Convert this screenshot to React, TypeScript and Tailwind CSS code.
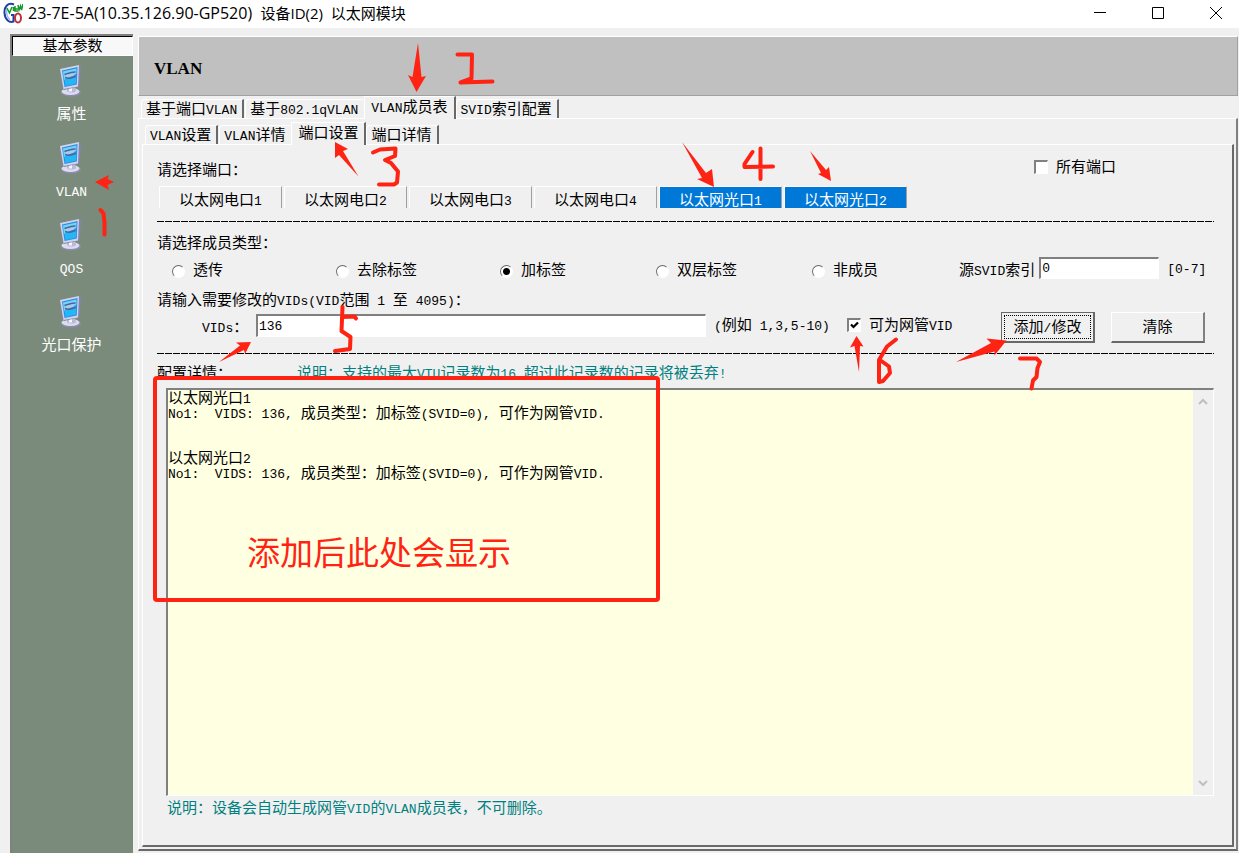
import { useState } from "react"

const sideItems = ["属性", "VLAN", "QOS", "光口保护"]
const mainTabs = ["基于端口VLAN", "基于802.1qVLAN", "VLAN成员表", "SVID索引配置"]
const subTabs = ["VLAN设置", "VLAN详情", "端口设置", "端口详情"]
const ports = ["以太网电口1", "以太网电口2", "以太网电口3", "以太网电口4", "以太网光口1", "以太网光口2"]
const memberTypes = [
  { label: "透传", width: "w-[164px]" },
  { label: "去除标签", width: "w-[164px]" },
  { label: "加标签", width: "w-[156px]" },
  { label: "双层标签", width: "w-[156px]" },
  { label: "非成员", width: "w-[147px]" },
]
const records = [
  "以太网光口1",
  "No1:  VIDS: 136, 成员类型：加标签(SVID=0), 可作为网管VID.",
  "",
  "",
  "以太网光口2",
  "No1:  VIDS: 136, 成员类型：加标签(SVID=0), 可作为网管VID.",
]

// latin runs are set smaller, so two letters take about one hanzi
function Mixed({ text }: { text: string }) {
  return (
    <span className="inline-block pt-1 leading-4 whitespace-pre">
      {text.split(/([\x20-\x7e]+)/).map((part, i) =>
        i % 2 ? (
          <span key={i} className="text-[13px]">
            {part}
          </span>
        ) : (
          part
        )
      )}
    </span>
  )
}

function AppLogo() {
  return (
    <svg width="20" height="22" viewBox="0 0 20 22" aria-hidden="true">
      <path d="M11 2.500C5 0 1 5 1.500 11c.5 7 5 10 9 8.500V13H8" fill="none" stroke="#1f3fa8" strokeWidth="2" />
      <path d="M4 6c-1 5 0 9 3 12" fill="none" stroke="#9db8f0" strokeWidth="1.500" />
      <ellipse cx="15" cy="16" rx="3" ry="4.500" fill="#fff" stroke="#c0303a" strokeWidth="2" />
      <path d="M4 6l2.500 5L9 5M10.500 5v4M12 7h3M12 4v5h3M15 3l1 5 1.500-4 1 4L20 2" fill="none" stroke="#149a2c" strokeWidth="1.500" />
    </svg>
  )
}

function MonitorIcon() {
  return (
    <svg width="24" height="32" viewBox="0 0 24 32" aria-hidden="true">
      <ellipse cx="12" cy="27.500" rx="10" ry="4" fill="#8b8bb4" />
      <ellipse cx="11.500" cy="26.500" rx="9" ry="3.500" fill="#dcdcec" />
      <path d="M8 22l8-1 1 5c-2 2-7 2-9 0z" fill="#b8b8d8" />
      <path d="M10 22l3-.5v5h-3z" fill="#f4f4fc" />
      <path d="M1 4L20 0l2 1.500-1.500 20L5 25l-1.500-2z" fill="#8484ae" />
      <path d="M1 4L20 0l-1 21.500L4.500 24z" fill="#d0d4e8" />
      <path d="M3 5.500L18.500 2 17.800 19.500 5.500 22z" fill="#2b8fe8" />
      <path d="M4 6.500L17.500 3.500 17.200 9 5 15z" fill="#74d5fa" />
      <path d="M5.500 14.500l11.800-2L17 18.500 6.500 21z" fill="#22b8f5" />
      <path d="M5.500 9.500c3-1 8-3 11-2.500M6 12.500c3 1.500 8 .5 10.500-1.500" fill="none" stroke="#4f649c" strokeWidth="1.500" />
      <path d="M7 11l8-1.500" stroke="#b9c6de" strokeWidth="2" />
    </svg>
  )
}

function Tabs({ items, active, onSelect, label }: { items: string[]; active: number; onSelect: (i: number) => void; label: string }) {
  return (
    <div role="tablist" aria-label={label} className="flex items-end pl-[3px]">
      {items.map((item, i) => (
        <button
          key={item}
          type="button"
          role="tab"
          aria-selected={i === active}
          onClick={() => onSelect(i)}
          className={
            i === active
              ? "relative -mb-px flex h-[23px] items-start border-r-2 border-l border-t border-l-white border-t-white border-r-[#696969] bg-[#f0f0f0] pr-[6px] pl-[6px] leading-5"
              : `mr-px flex h-[19px] items-center rounded-tl-sm border-l border-t border-l-white border-t-white pr-[5px] pl-[4px] leading-4 ${
                  i === active - 1 ? "" : "border-r-2 border-r-[#696969]"
                }`
          }
        >
          <Mixed text={item} />
        </button>
      ))}
    </div>
  )
}

function CheckBox({ label, checked, onChange }: { label: string; checked: boolean; onChange: (v: boolean) => void }) {
  return (
    <label className="flex items-center gap-2">
      <span className="relative flex">
        <input
          type="checkbox"
          checked={checked}
          onChange={(e) => onChange(e.target.checked)}
          className="size-[14px] appearance-none border border-t-2 border-l-2 border-t-[#808080] border-l-[#808080] border-r-white border-b-white bg-white"
        />
        {checked && (
          <svg className="pointer-events-none absolute top-[3px] left-[3px]" width="9" height="9" viewBox="0 0 9 9">
            <path d="M1 3.500l2.500 2.500L8 1.500" fill="none" stroke="#000" strokeWidth="2.200" />
          </svg>
        )}
      </span>
      <Mixed text={label} />
    </label>
  )
}

function Dashes({ className }: { className: string }) {
  return (
    <div
      className={`h-px shrink-0 bg-[repeating-linear-gradient(90deg,#000_0,#000_7px,transparent_7px,transparent_8px)] ${className}`}
    />
  )
}

const sunken =
  "border border-t-2 border-l-2 border-t-[#808080] border-l-[#808080] border-r-white border-b-white bg-white px-px font-['Liberation_Mono',monospace] text-[13px] outline-none"

// hand-drawn step marks on top of the window
function Annotations() {
  return (
    <div className="pointer-events-none absolute top-0 left-0 text-[#ff2314]">
      <svg width="1239" height="853" viewBox="0 0 1239 853" aria-hidden="true">
        <g fill="currentColor">
          <path d="M95 182l14-7-1.500 4 6.500 3-6.500 3 1.500 5z" />
          <path d="M418 43l3.500 34 4.500-1-9.500 16L408 75l4.500 2z" />
          <path d="M335 142l13 7-5 2 15.500 25.500L339 155l-4 3z" />
          <path d="M682 142l24 31 6-4 2 18-17-8 5-1z" />
          <path d="M810 151l16 19 3-3 2 14-13-7 3-1z" />
          <path d="M219 362l21-16.500-4-3 15-.5-6 12-1-4z" />
          <path d="M856.500 336l7 10.500-3.500-.5-1 26-4.500-26-4.500 1.500z" />
          <path d="M956 362l35-19-4.500-4.500 20 2-12 15v-4z" />
        </g>
        <g fill="none" stroke="currentColor" strokeWidth="4" strokeLinecap="round" strokeLinejoin="round">
          <path d="M100.500 210l3 3.500 1 9v12" />
          <path d="M457.500 54.500h14.500l-.5 24-11 4 32-1" />
          <path d="M373 152.500l7-3 15.500-1-.5 7.500-10 4 6 3 7 8.500-1 11-3 2h-15" />
          <path d="M752.500 152l-8 12v3l28.500-.5M760.500 148.500V179" />
          <path d="M342.500 307l-1 24 9 6-.5 12-15 2M342.500 317l12-.5 1.500 2" />
          <path d="M896 339.500l-9 7-8 13.500v22l4-1 7-8-1-6.500-9-6.500" />
          <path d="M1020 358.500h16.500l3.500 3.500-2.500 6-1 9-3.500 3.500-1.500 8" />
          <rect x="155" y="378" width="503" height="222" rx="2" />
        </g>
      </svg>
      <p className="absolute top-[537px] left-[247px] text-[33px] leading-10 whitespace-nowrap">添加后此处会显示</p>
    </div>
  )
}

export default function App() {
  const [mainTab, setMainTab] = useState(2)
  const [subTab, setSubTab] = useState(2)
  const [selected, setSelected] = useState<number[]>([4, 5])
  const [allPorts, setAllPorts] = useState(false)
  const [memberType, setMemberType] = useState(2)
  const [svid, setSvid] = useState("0")
  const [vids, setVids] = useState("136")
  const [manageVid, setManageVid] = useState(true)

  function togglePort(i: number) {
    setSelected((prev) => (prev.includes(i) ? prev.filter((p) => p !== i) : [...prev, i]))
  }

  return (
    <div className="relative flex min-h-screen flex-col bg-[#f0f0f0] font-['Liberation_Mono','Noto_Sans_CJK_SC',monospace] text-[15px] leading-5 text-black">
      {/* 标题栏 */}
      <header className="flex h-7 shrink-0 items-center bg-white pb-[2px] pl-[3px]">
        <AppLogo />
        <h1 className="ml-[5px] flex-1 font-['Open_Sans','Noto_Sans_CJK_SC',sans-serif] text-[16px] whitespace-pre">
          23-7E-5A(10.35.126.90-GP520)  <span className="text-[15px]">设备ID(2)  以太网模块</span>
        </h1>
        <div className="flex h-full gap-3">
          <button type="button" aria-label="最小化" className="flex w-[46px] items-center justify-center">
            <svg width="12" height="12" stroke="#000">
              <path d="M0 5.500h12" />
            </svg>
          </button>
          <button type="button" aria-label="最大化" className="flex w-[46px] items-center justify-center">
            <svg width="12" height="12" fill="none" stroke="#000">
              <path d="M.5.5h11v11H.5z" />
            </svg>
          </button>
          <button type="button" aria-label="关闭" className="flex w-[46px] items-center justify-center">
            <svg width="12" height="12" stroke="#000">
              <path d="M0 0l12 12M12 0L0 12" />
            </svg>
          </button>
        </div>
      </header>

      <div className="flex flex-1">
        {/* 左侧导航 */}
        <nav className="mt-[6px] ml-[10px] flex w-[123px] shrink-0 flex-col border-t-2 border-l-2 border-[#808080] bg-[#7b8b7b]">
          <button
            type="button"
            className="flex h-5 items-center justify-center border-t border-l border-t-black border-l-black border-r border-b border-r-white border-b-white bg-[#f8f8f8]"
          >
            <Mixed text="基本参数" />
          </button>
          {sideItems.map((item) => (
            <button key={item} type="button" className="flex h-[77px] flex-col items-center pt-[9px] pr-[2px] text-white">
              <span className="pr-[2px]">
                <MonitorIcon />
              </span>
              <span className="mt-[7px] flex">
                <Mixed text={item} />
              </span>
            </button>
          ))}
        </nav>

        <main className="mt-2 mr-px ml-[5px] flex min-w-0 flex-1 flex-col">
          <div className="flex h-[60px] shrink-0 items-center border border-t-white border-l-white border-r-[#a0a0a0] border-b-[#a0a0a0] bg-[#c0c0c0] px-[15px] pt-[6px]">
            <h2 className="font-['Liberation_Serif',serif] text-[17px] font-bold">VLAN</h2>
          </div>

          <div className="flex h-[22px] shrink-0 items-end">
            <Tabs items={mainTabs} active={mainTab} onSelect={setMainTab} label="VLAN" />
          </div>
          <section className="mb-[2px] flex flex-1 flex-col border-t border-r-2 border-b-2 border-l border-t-white border-l-white border-r-[#808080] border-b-[#696969] pr-[2px] pb-[2px] pl-[3px]">
            <div className="flex h-[25px] shrink-0 items-end">
              <Tabs items={subTabs} active={subTab} onSelect={setSubTab} label="VLAN成员表" />
            </div>
            <form
              onSubmit={(e) => e.preventDefault()}
              className="flex flex-1 flex-col border-t border-r-2 border-b-2 border-l border-t-white border-l-white border-r-[#696969] border-b-[#696969] pr-[18px] pb-[27px] pl-[14px]"
            >
              <div className="mt-[13px] flex h-6 items-center justify-between">
                <Mixed text="请选择端口：" />
                <div className="mr-[98px] mb-[6px]">
                  <CheckBox label="所有端口" checked={allPorts} onChange={setAllPorts} />
                </div>
              </div>

              <div className="mt-1 ml-[2px] flex h-[22px] gap-[2px]">
                {ports.map((port, i) => (
                  <button
                    key={port}
                    type="button"
                    aria-pressed={selected.includes(i)}
                    onClick={() => togglePort(i)}
                    className={`flex w-[123px] justify-center border-t border-r border-l border-t-white border-l-white border-r-[#a0a0a0] pt-[3px] leading-5 ${
                      selected.includes(i) ? "bg-[#0078d7] text-white" : ""
                    }`}
                  >
                    <Mixed text={port} />
                  </button>
                ))}
              </div>
              <Dashes className="mt-[13px]" />

              <div className="mt-[11px] flex h-5">
                <Mixed text="请选择成员类型：" />
              </div>
              <div className="mt-1 flex h-[26px] items-center pl-[15px]">
                {memberTypes.map((type, i) => (
                  <label key={type.label} className={`flex items-center gap-2 ${type.width}`}>
                    <input
                      type="radio"
                      name="memberType"
                      checked={memberType === i}
                      onChange={() => setMemberType(i)}
                      className="mt-[2px] size-[13px] appearance-none rounded-full border border-t-[#696969] border-l-[#696969] border-r-white border-b-white bg-white checked:bg-[radial-gradient(circle,#000_0,#000_3px,#fff_4px)]"
                    />
                    <Mixed text={type.label} />
                  </label>
                ))}
                <label htmlFor="svid" className="flex">
                  <Mixed text="源SVID索引" />
                </label>
                <input
                  id="svid"
                  value={svid}
                  onChange={(e) => setSvid(e.target.value)}
                  className={`ml-1 h-[22px] w-[120px] self-start ${sunken}`}
                />
                <span className="mb-1 ml-2 flex">
                  <Mixed text="[0-7]" />
                </span>
              </div>

              <div className="mt-[7px] flex h-5">
                <Mixed text="请输入需要修改的VIDs(VID范围 1 至 4095)：" />
              </div>
              <div className="mt-[2px] flex h-[31px] items-center">
                <label htmlFor="vids" className="mb-[2px] ml-[45px] flex w-[54px]">
                  <Mixed text="VIDs：" />
                </label>
                <input
                  id="vids"
                  value={vids}
                  onChange={(e) => setVids(e.target.value)}
                  className={`mb-1 h-[23px] w-[450px] ${sunken}`}
                />
                <span className="mb-[6px] ml-2 flex w-[133px]">
                  <Mixed text="(例如 1,3,5-10)" />
                </span>
                <div className="mb-[6px]">
                  <CheckBox label="可为网管VID" checked={manageVid} onChange={setManageVid} />
                </div>
                <button
                  type="submit"
                  className="mr-4 ml-auto h-[31px] w-[94px] border border-r-2 border-b-2 border-[#696969] p-[2px]"
                >
                  <span className="flex h-full items-center justify-center border border-dotted border-black">
                    <Mixed text="添加/修改" />
                  </span>
                </button>
                <button
                  type="button"
                  onClick={() => setVids("")}
                  className="mr-[9px] flex h-[31px] w-[94px] items-center justify-center border border-r-2 border-b-2 border-t-white border-l-white border-r-[#808080] border-b-[#696969]"
                >
                  <Mixed text="清除" />
                </button>
              </div>
              <Dashes className="mt-[10px]" />

              <div className="mt-[9px] flex h-5">
                <span className="flex w-[140px]">
                  <Mixed text="配置详情：" />
                </span>
                <span className="flex text-[#008080]">
                  <Mixed text="说明：支持的最大VTU记录数为16,超过此记录数的记录将被丢弃!" />
                </span>
              </div>
              <div className="mt-[5px] ml-[9px] flex flex-1 border border-t-2 border-l-2 border-t-[#808080] border-l-[#808080] border-r-white border-b-white bg-[#ffffe1]">
                <div tabIndex={0} aria-label="配置详情" className="flex-1 outline-none">
                  {records.map((line, i) => (
                    <div key={i} className="flex h-[15px] items-center">
                      <Mixed text={line} />
                    </div>
                  ))}
                </div>
                <div className="flex w-5 flex-col items-center justify-between bg-[#f0f0f0] py-2">
                  <svg width="10" height="7" fill="none" stroke="#bfbfbf" strokeWidth="2">
                    <path d="M1 6l4-4 4 4" />
                  </svg>
                  <svg width="10" height="7" fill="none" stroke="#bfbfbf" strokeWidth="2">
                    <path d="M1 1l4 4 4-4" />
                  </svg>
                </div>
              </div>
              <div className="mt-[2px] ml-[10px] flex h-5 text-[#008080]">
                <Mixed text="说明：设备会自动生成网管VID的VLAN成员表，不可删除。" />
              </div>
            </form>
          </section>
        </main>
      </div>

      <Annotations />
    </div>
  )
}
